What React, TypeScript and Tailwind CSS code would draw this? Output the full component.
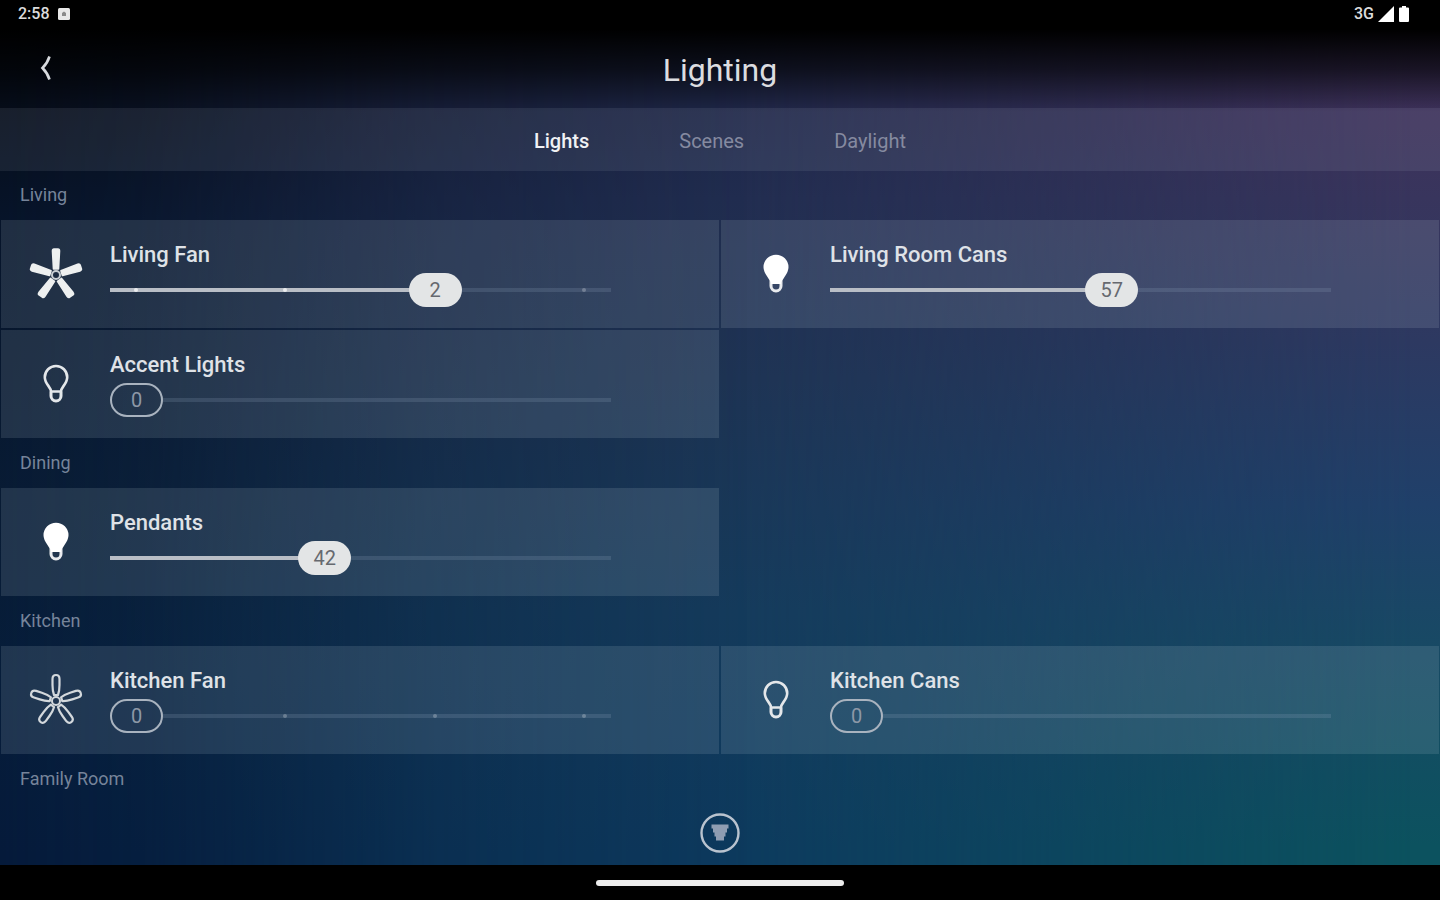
import { useState } from "react";

type DeviceKind = "fan" | "light";

interface Device {
  id: string;
  name: string;
  kind: DeviceKind;
  level: number;
}

interface Room {
  name: string;
  devices: Device[];
}

const rooms: Room[] = [
  {
    name: "Living",
    devices: [
      { id: "living-fan", name: "Living Fan", kind: "fan", level: 2 },
      { id: "living-cans", name: "Living Room Cans", kind: "light", level: 57 },
      { id: "accent", name: "Accent Lights", kind: "light", level: 0 },
    ],
  },
  {
    name: "Dining",
    devices: [{ id: "pendants", name: "Pendants", kind: "light", level: 42 }],
  },
  {
    name: "Kitchen",
    devices: [
      { id: "kitchen-fan", name: "Kitchen Fan", kind: "fan", level: 0 },
      { id: "kitchen-cans", name: "Kitchen Cans", kind: "light", level: 0 },
    ],
  },
  { name: "Family Room", devices: [] },
];

const tabs = ["Lights", "Scenes", "Daylight"];

const FanIcon = ({ on }: { on: boolean }) => (
  <svg viewBox="0 0 56 56" className="size-14" fill="none" aria-hidden="true">
    {[0, 72, 144, 216, 288].map((angle) => (
      <path
        key={angle}
        d={
          on
            ? "M25.500 23 24.500 5Q24.500 3 26 3H30Q31.500 3 31.500 5L30.500 23Z"
            : "M26 23Q24.500 19 24.500 13V7Q24.500 3 28 3T31.500 7V13Q31.500 19 30 23Z"
        }
        transform={`rotate(${angle} 28 29)`}
        fill={on ? "#eef0f0" : "none"}
        stroke={on ? "#eef0f0" : "#d3d8dc"}
        strokeWidth={on ? 1.6 : 2.2}
        strokeLinejoin="round"
      />
    ))}
    <circle
      cx="28"
      cy="29"
      r="4"
      fill={on ? "#1d2c42" : "none"}
      stroke={on ? "#c9ced3" : "#d3d8dc"}
      strokeWidth="2"
    />
  </svg>
);

const BulbIcon = ({ on }: { on: boolean }) => (
  <svg viewBox="0 0 28 40" className="h-10 w-7" fill="none" aria-hidden="true">
    <path
      d="M9 27.500C9 23 2.800 20 2.800 13.200a11.200 11.200 0 0 1 22.400 0C25.200 20 19 23 19 27.500Z"
      fill={on ? "#fff" : "none"}
      stroke={on ? "#fff" : "#e4e7ea"}
      strokeWidth="2.600"
      strokeLinejoin="round"
    />
    <path
      d="M9 27.500V32a5 5 0 0 0 10 0v-4.500"
      stroke={on ? "#e9ebee" : "#e4e7ea"}
      strokeWidth="3"
    />
    {on && <path d="M9 28.500h10" stroke="#fff" strokeWidth="3" />}
  </svg>
);

const LevelSlider = ({
  device,
  onChange,
}: {
  device: Device;
  onChange: (level: number) => void;
}) => {
  const max = device.kind === "fan" ? 3 : 100;
  const ratio = device.level / max;
  const on = device.level > 0;
  const steps = device.kind === "fan" ? [0, 1, 2, 3] : [];

  return (
    <div className="relative flex h-[34px] items-center">
      <div className={`h-1 flex-1 bg-[#8fa3c0]/20 ${on ? "" : "ml-[52px]"}`}>
        <div
          className="h-full bg-[#b9bec6]"
          style={{ width: `${ratio * 100}%` }}
        />
      </div>
      {/* Speed marks */}
      {steps
        .filter((step) => step !== device.level)
        .map((step) => (
          <span
            key={step}
            className={`absolute ml-6 size-1 rounded-full ${
              step < device.level ? "bg-white/70" : "bg-white/25"
            }`}
            style={{ left: `calc((100% - 53px) * ${step / max})` }}
          />
        ))}
      <input
        id={device.id}
        type="range"
        min={0}
        max={max}
        value={device.level}
        onChange={(e) => onChange(Number(e.target.value))}
        className="absolute inset-0 h-full w-full cursor-pointer opacity-0"
      />
      <span
        className={`pointer-events-none absolute flex h-[34px] w-[53px] items-center justify-center rounded-full text-xl ${
          on
            ? "bg-[#e3e5e6] text-[#66696f]"
            : "border-2 border-[#a9b3bf] text-[#8d98a7]"
        }`}
        style={{ left: `calc((100% - 53px) * ${ratio})` }}
      >
        {device.level}
      </span>
    </div>
  );
};

const DeviceCard = ({
  device,
  onChange,
}: {
  device: Device;
  onChange: (level: number) => void;
}) => {
  const on = device.level > 0;

  return (
    <div className="m-px flex h-[108px] items-center bg-[#d4e2e4]/13 pr-[108px]">
      <div className="flex w-[109px] shrink-0 justify-center">
        {device.kind === "fan" ? <FanIcon on={on} /> : <BulbIcon on={on} />}
      </div>
      <div className="flex-1">
        <label
          htmlFor={device.id}
          className="block text-[22px] leading-7 font-medium text-[#dfe2e7]"
        >
          {device.name}
        </label>
        <div className="pt-1">
          <LevelSlider device={device} onChange={onChange} />
        </div>
      </div>
    </div>
  );
};

const App = () => {
  const [activeTab, setActiveTab] = useState<string>("Lights");
  const [levels, setLevels] = useState<Record<string, number>>({});

  return (
    <div className="relative isolate flex min-h-screen flex-col bg-[linear-gradient(to_bottom,#40305c_0%,#3d325b_14%,#38355d_22%,#2d3961_38%,#20406a_56%,#174a64_73%,#0c525f_94%)] font-[Roboto,sans-serif]">
      {/* Backdrop shading */}
      <div className="absolute inset-0 -z-10 bg-[linear-gradient(to_bottom,#1f2748_12%,#212d50_22%,#1e3454_42%,#153b5c_68%,#0d3a5e_95%)] [mask-image:linear-gradient(to_right,black_50%,rgba(0,0,0,0.6)_70%,transparent_98%)]" />
      <div className="absolute inset-0 -z-10 bg-[linear-gradient(to_bottom,#060d1a_12%,#06142a_25%,#081b34_55%,#061d3a_75%,#051a3a_95%)] [mask-image:linear-gradient(to_right,black_0%,rgba(0,0,0,0.85)_10%,rgba(0,0,0,0.35)_30%,transparent_52%)]" />
      <div className="absolute inset-x-0 top-0 -z-10 h-28 bg-[linear-gradient(to_bottom,black_26%,rgba(0,0,0,0.6)_62%,transparent_100%)]" />

      {/* Status bar */}
      <div className="flex h-7 items-center justify-between bg-black pr-[30px] pl-[18px] text-base font-medium text-[#dcdcdc]">
        <div className="flex items-center gap-2">
          <span>2:58</span>
          <svg viewBox="0 0 12 12" className="size-3" aria-hidden="true">
            <rect width="12" height="12" rx="1.500" fill="#e8e8e8" />
            <path d="M4 8V5l2-1.500L8 5v3Z" fill="#8a8a8a" />
          </svg>
        </div>
        <div className="flex items-center gap-1">
          <span>3G</span>
          <svg viewBox="0 0 16 16" className="size-4" aria-hidden="true">
            <path d="M16 0v16H0Z" fill="#fff" />
          </svg>
          <svg viewBox="0 0 12 16" className="h-4 w-3" aria-hidden="true">
            <path
              d="M4 0h4v1.500h2q1 0 1 1v12q0 1.500-1 1.500H2q-1 0-1-1.500v-12q0-1 1-1h2Z"
              fill="#fff"
            />
          </svg>
        </div>
      </div>

      <header className="grid h-20 grid-cols-[1fr_auto_1fr] items-center">
        <button
          type="button"
          aria-label="Back"
          className="ml-[26px] flex size-10 items-center justify-center justify-self-start"
        >
          <svg viewBox="0 0 12 26" className="h-[26px] w-3" fill="none">
            <path
              d="M9.500 1.500Q7.500 8 2.500 13Q7.500 18 9.500 24.500"
              stroke="#d8dade"
              strokeWidth="2.600"
            />
          </svg>
        </button>
        <h1 className="pt-1 text-[32px] leading-10 text-[#dcdde0]">Lighting</h1>
      </header>

      {/* Tabs */}
      <nav className="flex h-[63px] items-center justify-center gap-[90px] bg-[#d4dce4]/9 pt-0.5">
        {tabs.map((tab) => (
          <button
            key={tab}
            type="button"
            onClick={() => setActiveTab(tab)}
            className={`text-xl ${
              activeTab === tab ? "font-medium text-[#f0f1f4]" : "text-[#858aa0]"
            }`}
          >
            {tab}
          </button>
        ))}
      </nav>

      <main className="flex-1">
        {rooms.map((room) => (
          <section key={room.name}>
            <h2 className="flex h-12 items-center px-5 text-lg text-[#76849a]">
              {room.name}
            </h2>
            <div className="grid grid-cols-2">
              {room.devices.map((device) => (
                <DeviceCard
                  key={device.id}
                  device={{
                    ...device,
                    level: levels[device.id] ?? device.level,
                  }}
                  onChange={(level) =>
                    setLevels((prev) => ({ ...prev, [device.id]: level }))
                  }
                />
              ))}
            </div>
          </section>
        ))}
      </main>

      <div className="flex justify-center pb-3">
        <button type="button" aria-label="Filter">
          <svg viewBox="0 0 40 40" className="size-10" fill="none">
            <circle cx="20" cy="20" r="18.500" stroke="#b9c3cf" strokeWidth="2.400" />
            <path
              d="M11.500 13.500h17M13 17.500h14M14.500 21.500h11M16 25.500h8"
              stroke="#8f9db2"
              strokeWidth="3.800"
            />
          </svg>
        </button>
      </div>

      {/* Gesture bar */}
      <footer className="flex h-[35px] items-center justify-center bg-black">
        <div className="h-1.5 w-62 rounded-full bg-[#ececec]" />
      </footer>
    </div>
  );
};

export default App;
